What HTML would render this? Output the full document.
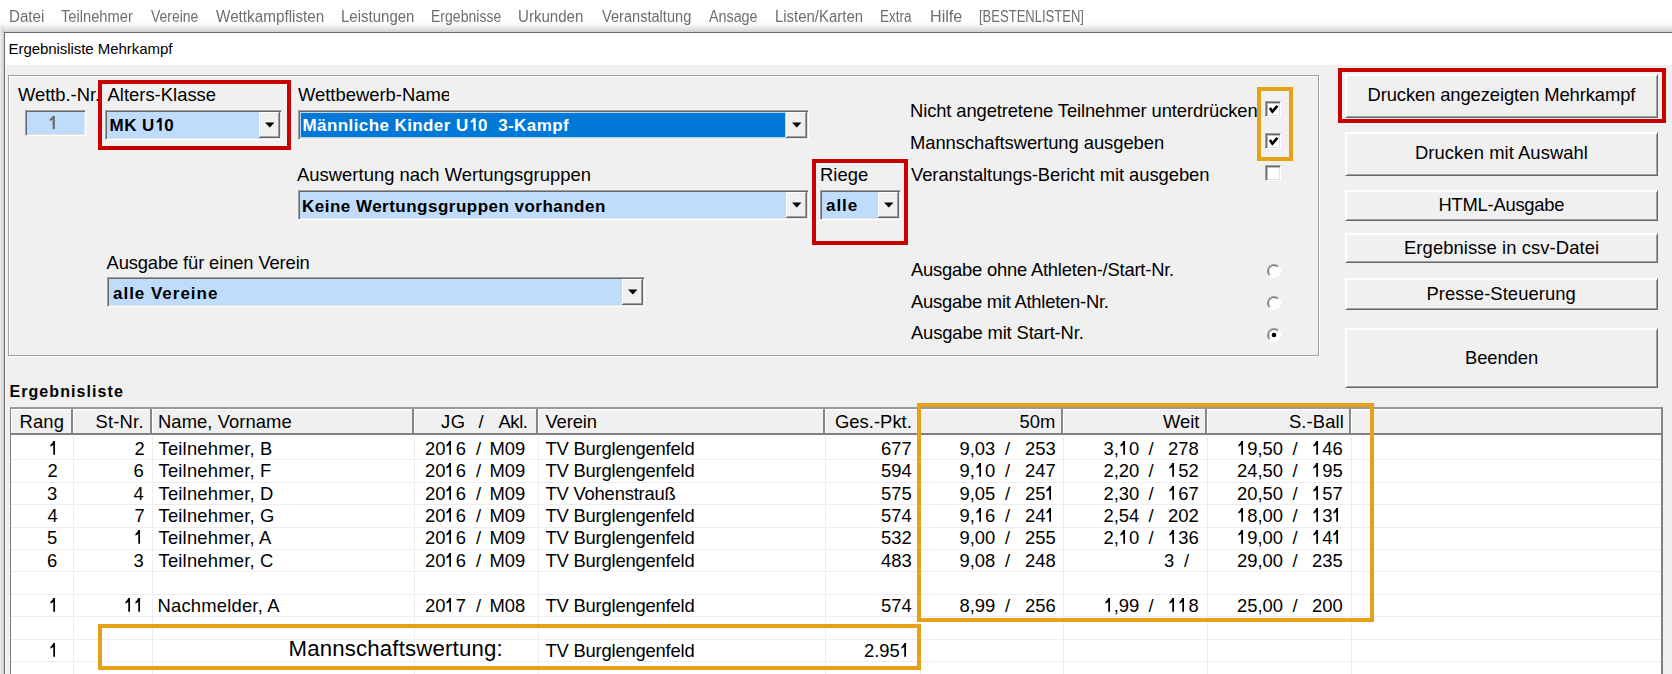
<!DOCTYPE html>
<html><head><meta charset="utf-8"><style>
html,body{margin:0;padding:0;}
body{width:1672px;height:674px;position:relative;overflow:hidden;background:#fff;font-family:"Liberation Sans", sans-serif;}
body>div,body>svg{position:absolute;}
</style></head><body>
<div style="left:0px;top:0px;width:1672px;height:674px;background:#fff;"></div>
<div style="left:0px;top:21px;width:1672px;height:11px;background:linear-gradient(#ffffff,#f7f7f7 35%,#e4e4e4 70%,#cfcfcf);"></div>
<div style="left:0px;top:24px;width:4px;height:650px;background:linear-gradient(90deg,#efefef,#cdcdcd);-webkit-mask-image:linear-gradient(transparent,#000 8px);mask-image:linear-gradient(transparent,#000 8px);"></div>
<div style="left:4px;top:32px;width:1668px;height:1px;background:#6a6a6a;"></div>
<div style="left:4px;top:32px;width:1px;height:642px;background:#6a6a6a;"></div>
<div style="left:5px;top:33px;width:1667px;height:32px;background:#fff;"></div>
<div style="left:5px;top:65px;width:1667px;height:609px;background:#f0f0f0;"></div>
<div style="left:5px;top:65px;width:1px;height:609px;background:#fcfcfc;"></div>
<div style="left:8.5px;top:41px;font-size:15px;line-height:15px;color:#000;white-space:pre;letter-spacing:-0.055px;">Ergebnisliste Mehrkampf</div>
<div style="left:8.5px;top:9px;font-size:16px;line-height:16px;color:#6e6e6e;white-space:pre;transform:scaleX(0.9457);transform-origin:0 0;">Datei</div>
<div style="left:61.0px;top:9px;font-size:16px;line-height:16px;color:#6e6e6e;white-space:pre;transform:scaleX(0.9179);transform-origin:0 0;">Teilnehmer</div>
<div style="left:150.5px;top:9px;font-size:16px;line-height:16px;color:#6e6e6e;white-space:pre;transform:scaleX(0.8722);transform-origin:0 0;">Vereine</div>
<div style="left:215.5px;top:9px;font-size:16px;line-height:16px;color:#6e6e6e;white-space:pre;transform:scaleX(0.954);transform-origin:0 0;">Wettkampflisten</div>
<div style="left:340.5px;top:9px;font-size:16px;line-height:16px;color:#6e6e6e;white-space:pre;transform:scaleX(0.9377);transform-origin:0 0;">Leistungen</div>
<div style="left:431.0px;top:9px;font-size:16px;line-height:16px;color:#6e6e6e;white-space:pre;transform:scaleX(0.8772);transform-origin:0 0;">Ergebnisse</div>
<div style="left:518.0px;top:9px;font-size:16px;line-height:16px;color:#6e6e6e;white-space:pre;transform:scaleX(0.9426);transform-origin:0 0;">Urkunden</div>
<div style="left:601.5px;top:9px;font-size:16px;line-height:16px;color:#6e6e6e;white-space:pre;transform:scaleX(0.9124);transform-origin:0 0;">Veranstaltung</div>
<div style="left:709.0px;top:9px;font-size:16px;line-height:16px;color:#6e6e6e;white-space:pre;transform:scaleX(0.8944);transform-origin:0 0;">Ansage</div>
<div style="left:774.5px;top:9px;font-size:16px;line-height:16px;color:#6e6e6e;white-space:pre;transform:scaleX(0.9333);transform-origin:0 0;">Listen/Karten</div>
<div style="left:880.0px;top:9px;font-size:16px;line-height:16px;color:#6e6e6e;white-space:pre;transform:scaleX(0.8405);transform-origin:0 0;">Extra</div>
<div style="left:930.0px;top:9px;font-size:16px;line-height:16px;color:#6e6e6e;white-space:pre;transform:scaleX(1.01);transform-origin:0 0;">Hilfe</div>
<div style="left:978.5px;top:9px;font-size:16px;line-height:16px;color:#6e6e6e;white-space:pre;transform:scaleX(0.8142);transform-origin:0 0;">[BESTENLISTEN]</div>
<div style="left:9px;top:76px;width:1311px;height:281px;border:1px solid #fff;box-sizing:border-box;"></div>
<div style="left:8px;top:75px;width:1311px;height:281px;border:1px solid #a0a0a0;box-sizing:border-box;"></div>
<div style="left:18.0px;top:86px;font-size:18.4px;line-height:18.4px;color:#000;white-space:pre;letter-spacing:-0.033px;">Wettb.-Nr.</div>
<div style="left:107.5px;top:86px;font-size:18.4px;line-height:18.4px;color:#000;white-space:pre;letter-spacing:0.017px;">Alters-Klasse</div>
<div style="left:298.0px;top:86px;font-size:18.4px;line-height:18.4px;color:#000;white-space:pre;width:150.5px;overflow:hidden;">Wettbewerb-Name</div>
<div style="left:297.0px;top:166px;font-size:18.4px;line-height:18.4px;color:#000;white-space:pre;letter-spacing:0.03px;">Auswertung nach Wertungsgruppen</div>
<div style="left:820.0px;top:166px;font-size:18.4px;line-height:18.4px;color:#000;white-space:pre;letter-spacing:0.075px;">Riege</div>
<div style="left:106.5px;top:254px;font-size:18.4px;line-height:18.4px;color:#000;white-space:pre;letter-spacing:-0.139px;">Ausgabe für einen Verein</div>
<div style="left:25px;top:110px;width:61px;height:26px;background:#bfdcfc;border-top:1px solid #a0a0a0;border-left:1px solid #a0a0a0;border-right:1px solid #fff;border-bottom:1px solid #fff;box-sizing:border-box;box-shadow:inset 1px 1px 0 #696969, inset -1px -1px 0 #e3e3e3;"></div>
<div style="left:48.0px;top:115px;font-size:17.5px;line-height:17.5px;color:#6d6d6d;white-space:pre;font-weight:bold;"><svg style="display:inline-block;width:0.556em;height:0.746em;vertical-align:0;position:static" viewBox="0 -30 556 746" preserveAspectRatio="none"><path d="M262 -30H392V716H262V190L100 255V145Q200 100 262 -30Z" fill="currentColor"/></svg></div>
<div style="left:105px;top:110px;width:177px;height:30px;background:#bfdcfc;border-top:1px solid #a0a0a0;border-left:1px solid #a0a0a0;border-right:1px solid #fff;border-bottom:1px solid #fff;box-sizing:border-box;box-shadow:inset 1px 1px 0 #696969, inset -1px -1px 0 #e3e3e3;"></div>
<div style="left:259px;top:112px;width:21px;height:26px;background:#f0f0f0;border-right:1px solid #696969;border-bottom:1px solid #696969;box-shadow:inset 1px 1px 0 #fff, inset -1px -1px 0 #a0a0a0;box-sizing:border-box;"></div>
<svg style="left:264.5px;top:122.0px;" width="10" height="6" viewBox="0 0 10 6"><path d="M0 0.5 H9.5 L4.75 5.5 Z" fill="#000"/></svg>
<div style="left:298px;top:110px;width:511px;height:30px;background:#bfdcfc;border-top:1px solid #a0a0a0;border-left:1px solid #a0a0a0;border-right:1px solid #fff;border-bottom:1px solid #fff;box-sizing:border-box;box-shadow:inset 1px 1px 0 #696969, inset -1px -1px 0 #e3e3e3;"></div>
<div style="left:786px;top:112px;width:21px;height:26px;background:#f0f0f0;border-right:1px solid #696969;border-bottom:1px solid #696969;box-shadow:inset 1px 1px 0 #fff, inset -1px -1px 0 #a0a0a0;box-sizing:border-box;"></div>
<svg style="left:791.5px;top:122.0px;" width="10" height="6" viewBox="0 0 10 6"><path d="M0 0.5 H9.5 L4.75 5.5 Z" fill="#000"/></svg>
<div style="left:300px;top:112px;width:486px;height:26px;background:#0078d7;border:1px solid #b8d8f8;box-sizing:border-box;"></div>
<div style="left:298px;top:190px;width:511px;height:30px;background:#bfdcfc;border-top:1px solid #a0a0a0;border-left:1px solid #a0a0a0;border-right:1px solid #fff;border-bottom:1px solid #fff;box-sizing:border-box;box-shadow:inset 1px 1px 0 #696969, inset -1px -1px 0 #e3e3e3;"></div>
<div style="left:786px;top:192px;width:21px;height:26px;background:#f0f0f0;border-right:1px solid #696969;border-bottom:1px solid #696969;box-shadow:inset 1px 1px 0 #fff, inset -1px -1px 0 #a0a0a0;box-sizing:border-box;"></div>
<svg style="left:791.5px;top:202.0px;" width="10" height="6" viewBox="0 0 10 6"><path d="M0 0.5 H9.5 L4.75 5.5 Z" fill="#000"/></svg>
<div style="left:820px;top:190px;width:81px;height:30px;background:#bfdcfc;border-top:1px solid #a0a0a0;border-left:1px solid #a0a0a0;border-right:1px solid #fff;border-bottom:1px solid #fff;box-sizing:border-box;box-shadow:inset 1px 1px 0 #696969, inset -1px -1px 0 #e3e3e3;"></div>
<div style="left:878px;top:192px;width:21px;height:26px;background:#f0f0f0;border-right:1px solid #696969;border-bottom:1px solid #696969;box-shadow:inset 1px 1px 0 #fff, inset -1px -1px 0 #a0a0a0;box-sizing:border-box;"></div>
<svg style="left:883.5px;top:202.0px;" width="10" height="6" viewBox="0 0 10 6"><path d="M0 0.5 H9.5 L4.75 5.5 Z" fill="#000"/></svg>
<div style="left:107px;top:277px;width:538px;height:30px;background:#bfdcfc;border-top:1px solid #a0a0a0;border-left:1px solid #a0a0a0;border-right:1px solid #fff;border-bottom:1px solid #fff;box-sizing:border-box;box-shadow:inset 1px 1px 0 #696969, inset -1px -1px 0 #e3e3e3;"></div>
<div style="left:622px;top:279px;width:21px;height:26px;background:#f0f0f0;border-right:1px solid #696969;border-bottom:1px solid #696969;box-shadow:inset 1px 1px 0 #fff, inset -1px -1px 0 #a0a0a0;box-sizing:border-box;"></div>
<svg style="left:627.5px;top:289.0px;" width="10" height="6" viewBox="0 0 10 6"><path d="M0 0.5 H9.5 L4.75 5.5 Z" fill="#000"/></svg>
<div style="left:109.5px;top:117px;font-size:17px;line-height:17px;color:#000;white-space:pre;font-weight:bold;letter-spacing:0.48px;">MK U<svg style="display:inline-block;width:0.556em;height:0.746em;vertical-align:0;position:static" viewBox="0 -30 556 746" preserveAspectRatio="none"><path d="M262 -30H392V716H262V190L100 255V145Q200 100 262 -30Z" fill="currentColor"/></svg>0</div>
<div style="left:302.5px;top:117px;font-size:17px;line-height:17px;color:#fff;white-space:pre;font-weight:bold;letter-spacing:0.411px;">Männliche Kinder U<svg style="display:inline-block;width:0.556em;height:0.746em;vertical-align:0;position:static" viewBox="0 -30 556 746" preserveAspectRatio="none"><path d="M262 -30H392V716H262V190L100 255V145Q200 100 262 -30Z" fill="currentColor"/></svg>0  3-Kampf</div>
<div style="left:302.0px;top:198px;font-size:17px;line-height:17px;color:#000;white-space:pre;font-weight:bold;letter-spacing:0.487px;">Keine Wertungsgruppen vorhanden</div>
<div style="left:826.0px;top:197px;font-size:17px;line-height:17px;color:#000;white-space:pre;font-weight:bold;letter-spacing:0.933px;">alle</div>
<div style="left:113.0px;top:285px;font-size:17px;line-height:17px;color:#000;white-space:pre;font-weight:bold;letter-spacing:0.982px;">alle Vereine</div>
<div style="left:910.0px;top:102px;font-size:18.4px;line-height:18.4px;color:#000;white-space:pre;letter-spacing:-0.118px;">Nicht angetretene Teilnehmer unterdrücken</div>
<div style="left:910.0px;top:134px;font-size:18.4px;line-height:18.4px;color:#000;white-space:pre;letter-spacing:-0.054px;">Mannschaftswertung ausgeben</div>
<div style="left:911.0px;top:166px;font-size:18.4px;line-height:18.4px;color:#000;white-space:pre;letter-spacing:-0.062px;">Veranstaltungs-Bericht mit ausgeben</div>
<div style="left:911.0px;top:261px;font-size:18.4px;line-height:18.4px;color:#000;white-space:pre;letter-spacing:-0.216px;">Ausgabe ohne Athleten-/Start-Nr.</div>
<div style="left:911.0px;top:293px;font-size:18.4px;line-height:18.4px;color:#000;white-space:pre;letter-spacing:-0.239px;">Ausgabe mit Athleten-Nr.</div>
<div style="left:911.0px;top:324px;font-size:18.4px;line-height:18.4px;color:#000;white-space:pre;letter-spacing:-0.15px;">Ausgabe mit Start-Nr.</div>
<div style="left:1265px;top:101px;width:16px;height:16px;background:#fff;border-top:1px solid #a0a0a0;border-left:1px solid #a0a0a0;border-right:1px solid #fff;border-bottom:1px solid #fff;box-shadow:inset 1px 1px 0 #696969, inset 2px 2px 0 #c0c0c0, inset -1px -1px 0 #e3e3e3;box-sizing:border-box;"></div>
<svg style="left:1265px;top:101px;" width="16" height="16" viewBox="0 0 16 16"><path d="M4.9 7 L7.4 10.6 L12.5 4.9" stroke="#000" stroke-width="2.8" fill="none" stroke-linejoin="miter" stroke-miterlimit="3"/></svg>
<div style="left:1265px;top:133px;width:16px;height:16px;background:#fff;border-top:1px solid #a0a0a0;border-left:1px solid #a0a0a0;border-right:1px solid #fff;border-bottom:1px solid #fff;box-shadow:inset 1px 1px 0 #696969, inset 2px 2px 0 #c0c0c0, inset -1px -1px 0 #e3e3e3;box-sizing:border-box;"></div>
<svg style="left:1265px;top:133px;" width="16" height="16" viewBox="0 0 16 16"><path d="M4.9 7 L7.4 10.6 L12.5 4.9" stroke="#000" stroke-width="2.8" fill="none" stroke-linejoin="miter" stroke-miterlimit="3"/></svg>
<div style="left:1265px;top:165px;width:16px;height:16px;background:#fff;border-top:1px solid #a0a0a0;border-left:1px solid #a0a0a0;border-right:1px solid #fff;border-bottom:1px solid #fff;box-shadow:inset 1px 1px 0 #696969, inset 2px 2px 0 #c0c0c0, inset -1px -1px 0 #e3e3e3;box-sizing:border-box;"></div>
<svg style="left:1266px;top:263px;" width="16" height="16" viewBox="0 0 16 16"><circle cx="8" cy="8" r="6.5" fill="#fff"/><path d="M12.6 3.4 A6.5 6.5 0 0 0 3.4 12.6" stroke="#a0a0a0" fill="none" stroke-width="1.2"/><path d="M11.9 4.1 A5.5 5.5 0 0 0 4.1 11.9" stroke="#696969" fill="none" stroke-width="1"/><path d="M3.4 12.6 A6.5 6.5 0 0 0 12.6 3.4" stroke="#ffffff" fill="none" stroke-width="1.2"/></svg>
<svg style="left:1266px;top:295px;" width="16" height="16" viewBox="0 0 16 16"><circle cx="8" cy="8" r="6.5" fill="#fff"/><path d="M12.6 3.4 A6.5 6.5 0 0 0 3.4 12.6" stroke="#a0a0a0" fill="none" stroke-width="1.2"/><path d="M11.9 4.1 A5.5 5.5 0 0 0 4.1 11.9" stroke="#696969" fill="none" stroke-width="1"/><path d="M3.4 12.6 A6.5 6.5 0 0 0 12.6 3.4" stroke="#ffffff" fill="none" stroke-width="1.2"/></svg>
<svg style="left:1266px;top:327px;" width="16" height="16" viewBox="0 0 16 16"><circle cx="8" cy="8" r="6.5" fill="#fff"/><path d="M12.6 3.4 A6.5 6.5 0 0 0 3.4 12.6" stroke="#a0a0a0" fill="none" stroke-width="1.2"/><path d="M11.9 4.1 A5.5 5.5 0 0 0 4.1 11.9" stroke="#696969" fill="none" stroke-width="1"/><path d="M3.4 12.6 A6.5 6.5 0 0 0 12.6 3.4" stroke="#ffffff" fill="none" stroke-width="1.2"/><circle cx="8" cy="8" r="2.3" fill="#000"/></svg>
<div style="left:1345px;top:74px;width:313px;height:44px;background:#f0f0f0;border-top:1px solid #fff;border-left:1px solid #fff;border-right:1px solid #696969;border-bottom:1px solid #696969;box-shadow:inset 1px 1px 0 #ffffff, inset -1px -1px 0 #a0a0a0;box-sizing:border-box;"></div>
<div style="left:1367.5px;top:86px;font-size:18.4px;line-height:18.4px;color:#000;white-space:pre;letter-spacing:-0.107px;">Drucken angezeigten Mehrkampf</div>
<div style="left:1345px;top:132px;width:313px;height:44px;background:#f0f0f0;border-top:1px solid #fff;border-left:1px solid #fff;border-right:1px solid #696969;border-bottom:1px solid #696969;box-shadow:inset 1px 1px 0 #ffffff, inset -1px -1px 0 #a0a0a0;box-sizing:border-box;"></div>
<div style="left:1415.0px;top:144px;font-size:18.4px;line-height:18.4px;color:#000;white-space:pre;letter-spacing:0.067px;">Drucken mit Auswahl</div>
<div style="left:1345px;top:190px;width:313px;height:31px;background:#f0f0f0;border-top:1px solid #fff;border-left:1px solid #fff;border-right:1px solid #696969;border-bottom:1px solid #696969;box-shadow:inset 1px 1px 0 #ffffff, inset -1px -1px 0 #a0a0a0;box-sizing:border-box;"></div>
<div style="left:1438.5px;top:196px;font-size:18.4px;line-height:18.4px;color:#000;white-space:pre;letter-spacing:-0.255px;">HTML-Ausgabe</div>
<div style="left:1345px;top:233px;width:313px;height:30px;background:#f0f0f0;border-top:1px solid #fff;border-left:1px solid #fff;border-right:1px solid #696969;border-bottom:1px solid #696969;box-shadow:inset 1px 1px 0 #ffffff, inset -1px -1px 0 #a0a0a0;box-sizing:border-box;"></div>
<div style="left:1404.0px;top:239px;font-size:18.4px;line-height:18.4px;color:#000;white-space:pre;letter-spacing:0.086px;">Ergebnisse in csv-Datei</div>
<div style="left:1345px;top:278px;width:313px;height:32px;background:#f0f0f0;border-top:1px solid #fff;border-left:1px solid #fff;border-right:1px solid #696969;border-bottom:1px solid #696969;box-shadow:inset 1px 1px 0 #ffffff, inset -1px -1px 0 #a0a0a0;box-sizing:border-box;"></div>
<div style="left:1426.5px;top:285px;font-size:18.4px;line-height:18.4px;color:#000;white-space:pre;letter-spacing:0.067px;">Presse-Steuerung</div>
<div style="left:1345px;top:328px;width:313px;height:60px;background:#f0f0f0;border-top:1px solid #fff;border-left:1px solid #fff;border-right:1px solid #696969;border-bottom:1px solid #696969;box-shadow:inset 1px 1px 0 #ffffff, inset -1px -1px 0 #a0a0a0;box-sizing:border-box;"></div>
<div style="left:1465.0px;top:349px;font-size:18.4px;line-height:18.4px;color:#000;white-space:pre;letter-spacing:-0.083px;">Beenden</div>
<div style="left:9.5px;top:384px;font-size:16px;line-height:16px;color:#000;white-space:pre;font-weight:bold;letter-spacing:1.067px;">Ergebnisliste</div>
<div style="left:10px;top:407px;width:1653px;height:267px;background:#fff;border-top:2px solid #9a9a9a;border-left:1px solid #808080;border-right:2px solid #808080;box-sizing:border-box;"></div>
<div style="left:11px;top:409px;width:62px;height:26px;background:#f0f0f0;border-right:2px solid #868686;border-bottom:2px solid #808080;box-shadow:inset 1px 1px 0 #fff;box-sizing:border-box;"></div>
<div style="left:73px;top:409px;width:79px;height:26px;background:#f0f0f0;border-right:2px solid #868686;border-bottom:2px solid #808080;box-shadow:inset 1px 1px 0 #fff;box-sizing:border-box;"></div>
<div style="left:152px;top:409px;width:262px;height:26px;background:#f0f0f0;border-right:2px solid #868686;border-bottom:2px solid #808080;box-shadow:inset 1px 1px 0 #fff;box-sizing:border-box;"></div>
<div style="left:414px;top:409px;width:124px;height:26px;background:#f0f0f0;border-right:2px solid #868686;border-bottom:2px solid #808080;box-shadow:inset 1px 1px 0 #fff;box-sizing:border-box;"></div>
<div style="left:538px;top:409px;width:287px;height:26px;background:#f0f0f0;border-right:2px solid #868686;border-bottom:2px solid #808080;box-shadow:inset 1px 1px 0 #fff;box-sizing:border-box;"></div>
<div style="left:825px;top:409px;width:94.5px;height:26px;background:#f0f0f0;border-right:2px solid #868686;border-bottom:2px solid #808080;box-shadow:inset 1px 1px 0 #fff;box-sizing:border-box;"></div>
<div style="left:919.5px;top:409px;width:143.5px;height:26px;background:#f0f0f0;border-right:2px solid #868686;border-bottom:2px solid #808080;box-shadow:inset 1px 1px 0 #fff;box-sizing:border-box;"></div>
<div style="left:1063px;top:409px;width:144px;height:26px;background:#f0f0f0;border-right:2px solid #868686;border-bottom:2px solid #808080;box-shadow:inset 1px 1px 0 #fff;box-sizing:border-box;"></div>
<div style="left:1207px;top:409px;width:144px;height:26px;background:#f0f0f0;border-right:2px solid #868686;border-bottom:2px solid #808080;box-shadow:inset 1px 1px 0 #fff;box-sizing:border-box;"></div>
<div style="left:1351px;top:409px;width:312px;height:26px;background:#f0f0f0;border-right:2px solid #868686;border-bottom:2px solid #808080;box-shadow:inset 1px 1px 0 #fff;box-sizing:border-box;"></div>
<div style="left:11px;top:459px;width:1650px;height:1px;background:#eeeeee;"></div>
<div style="left:11px;top:482px;width:1650px;height:1px;background:#eeeeee;"></div>
<div style="left:11px;top:504px;width:1650px;height:1px;background:#eeeeee;"></div>
<div style="left:11px;top:527px;width:1650px;height:1px;background:#eeeeee;"></div>
<div style="left:11px;top:549px;width:1650px;height:1px;background:#eeeeee;"></div>
<div style="left:11px;top:571px;width:1650px;height:1px;background:#eeeeee;"></div>
<div style="left:11px;top:594px;width:1650px;height:1px;background:#eeeeee;"></div>
<div style="left:11px;top:616px;width:1650px;height:1px;background:#eeeeee;"></div>
<div style="left:11px;top:639px;width:1650px;height:1px;background:#eeeeee;"></div>
<div style="left:11px;top:661px;width:1650px;height:1px;background:#eeeeee;"></div>
<div style="left:73px;top:435px;width:1px;height:239px;background:#eeeeee;"></div>
<div style="left:152px;top:435px;width:1px;height:239px;background:#eeeeee;"></div>
<div style="left:414px;top:435px;width:1px;height:239px;background:#eeeeee;"></div>
<div style="left:538px;top:435px;width:1px;height:239px;background:#eeeeee;"></div>
<div style="left:825px;top:435px;width:1px;height:239px;background:#eeeeee;"></div>
<div style="left:919.5px;top:435px;width:1px;height:239px;background:#eeeeee;"></div>
<div style="left:1063px;top:435px;width:1px;height:239px;background:#eeeeee;"></div>
<div style="left:1207px;top:435px;width:1px;height:239px;background:#eeeeee;"></div>
<div style="left:1351px;top:435px;width:1px;height:239px;background:#eeeeee;"></div>
<div style="left:19.5px;top:413px;font-size:18.4px;line-height:18.4px;color:#000;white-space:pre;letter-spacing:0.167px;">Rang</div>
<div style="left:95.5px;top:413px;font-size:18.4px;line-height:18.4px;color:#000;white-space:pre;letter-spacing:0.2px;">St-Nr.</div>
<div style="left:158.0px;top:413px;font-size:18.4px;line-height:18.4px;color:#000;white-space:pre;letter-spacing:0.067px;">Name, Vorname</div>
<div style="left:441.0px;top:413px;font-size:18.4px;line-height:18.4px;color:#000;white-space:pre;letter-spacing:0.6px;">JG</div>
<div style="left:478.5px;top:413px;font-size:18.4px;line-height:18.4px;color:#000;white-space:pre;">/</div>
<div style="left:498.5px;top:413px;font-size:18.4px;line-height:18.4px;color:#000;white-space:pre;letter-spacing:-0.4px;">Akl.</div>
<div style="left:545.5px;top:413px;font-size:18.4px;line-height:18.4px;color:#000;white-space:pre;letter-spacing:-0.14px;">Verein</div>
<div style="left:835.0px;top:413px;font-size:18.4px;line-height:18.4px;color:#000;white-space:pre;letter-spacing:0.025px;">Ges.-Pkt.</div>
<div style="left:1019.5px;top:413px;font-size:18.4px;line-height:18.4px;color:#000;white-space:pre;">50m</div>
<div style="left:1163.0px;top:413px;font-size:18.4px;line-height:18.4px;color:#000;white-space:pre;">Weit</div>
<div style="left:1289.0px;top:413px;font-size:18.4px;line-height:18.4px;color:#000;white-space:pre;letter-spacing:0.1px;">S.-Ball</div>
<div style="left:49.0px;top:440px;font-size:18.4px;line-height:18.4px;color:#000;white-space:pre;"><svg style="display:inline-block;width:0.556em;height:0.746em;vertical-align:0;position:static" viewBox="0 -30 556 746" preserveAspectRatio="none"><path d="M232 -30H328V716H232V190L78 285V182Q180 115 232 -30Z" fill="currentColor"/></svg></div>
<div style="left:134.5px;top:440px;font-size:18.4px;line-height:18.4px;color:#000;white-space:pre;">2</div>
<div style="left:158.5px;top:440px;font-size:18.4px;line-height:18.4px;color:#000;white-space:pre;letter-spacing:0.2px;">Teilnehmer, B</div>
<div style="left:425.0px;top:440px;font-size:18.4px;line-height:18.4px;color:#000;white-space:pre;">20<svg style="display:inline-block;width:0.556em;height:0.746em;vertical-align:0;position:static" viewBox="0 -30 556 746" preserveAspectRatio="none"><path d="M232 -30H328V716H232V190L78 285V182Q180 115 232 -30Z" fill="currentColor"/></svg>6</div>
<div style="left:476.0px;top:440px;font-size:18.4px;line-height:18.4px;color:#000;white-space:pre;">/</div>
<div style="left:489.5px;top:440px;font-size:18.4px;line-height:18.4px;color:#000;white-space:pre;">M09</div>
<div style="left:545.5px;top:440px;font-size:18.4px;line-height:18.4px;color:#000;white-space:pre;letter-spacing:-0.2px;">TV Burglengenfeld</div>
<div style="left:881.0px;top:440px;font-size:18.4px;line-height:18.4px;color:#000;white-space:pre;">677</div>
<div style="left:959.5px;top:440px;font-size:18.4px;line-height:18.4px;color:#000;white-space:pre;">9,03</div>
<div style="left:1005.0px;top:440px;font-size:18.4px;line-height:18.4px;color:#000;white-space:pre;">/</div>
<div style="left:1025.0px;top:440px;font-size:18.4px;line-height:18.4px;color:#000;white-space:pre;">253</div>
<div style="left:1103.5px;top:440px;font-size:18.4px;line-height:18.4px;color:#000;white-space:pre;">3,<svg style="display:inline-block;width:0.556em;height:0.746em;vertical-align:0;position:static" viewBox="0 -30 556 746" preserveAspectRatio="none"><path d="M232 -30H328V716H232V190L78 285V182Q180 115 232 -30Z" fill="currentColor"/></svg>0</div>
<div style="left:1148.5px;top:440px;font-size:18.4px;line-height:18.4px;color:#000;white-space:pre;">/</div>
<div style="left:1168.0px;top:440px;font-size:18.4px;line-height:18.4px;color:#000;white-space:pre;">278</div>
<div style="left:1237.0px;top:440px;font-size:18.4px;line-height:18.4px;color:#000;white-space:pre;"><svg style="display:inline-block;width:0.556em;height:0.746em;vertical-align:0;position:static" viewBox="0 -30 556 746" preserveAspectRatio="none"><path d="M232 -30H328V716H232V190L78 285V182Q180 115 232 -30Z" fill="currentColor"/></svg>9,50</div>
<div style="left:1292.5px;top:440px;font-size:18.4px;line-height:18.4px;color:#000;white-space:pre;">/</div>
<div style="left:1312.0px;top:440px;font-size:18.4px;line-height:18.4px;color:#000;white-space:pre;"><svg style="display:inline-block;width:0.556em;height:0.746em;vertical-align:0;position:static" viewBox="0 -30 556 746" preserveAspectRatio="none"><path d="M232 -30H328V716H232V190L78 285V182Q180 115 232 -30Z" fill="currentColor"/></svg>46</div>
<div style="left:47.5px;top:462px;font-size:18.4px;line-height:18.4px;color:#000;white-space:pre;">2</div>
<div style="left:133.5px;top:462px;font-size:18.4px;line-height:18.4px;color:#000;white-space:pre;">6</div>
<div style="left:158.5px;top:462px;font-size:18.4px;line-height:18.4px;color:#000;white-space:pre;letter-spacing:0.2px;">Teilnehmer, F</div>
<div style="left:425.0px;top:462px;font-size:18.4px;line-height:18.4px;color:#000;white-space:pre;">20<svg style="display:inline-block;width:0.556em;height:0.746em;vertical-align:0;position:static" viewBox="0 -30 556 746" preserveAspectRatio="none"><path d="M232 -30H328V716H232V190L78 285V182Q180 115 232 -30Z" fill="currentColor"/></svg>6</div>
<div style="left:476.0px;top:462px;font-size:18.4px;line-height:18.4px;color:#000;white-space:pre;">/</div>
<div style="left:489.5px;top:462px;font-size:18.4px;line-height:18.4px;color:#000;white-space:pre;">M09</div>
<div style="left:545.5px;top:462px;font-size:18.4px;line-height:18.4px;color:#000;white-space:pre;letter-spacing:-0.2px;">TV Burglengenfeld</div>
<div style="left:881.0px;top:462px;font-size:18.4px;line-height:18.4px;color:#000;white-space:pre;">594</div>
<div style="left:959.5px;top:462px;font-size:18.4px;line-height:18.4px;color:#000;white-space:pre;">9,<svg style="display:inline-block;width:0.556em;height:0.746em;vertical-align:0;position:static" viewBox="0 -30 556 746" preserveAspectRatio="none"><path d="M232 -30H328V716H232V190L78 285V182Q180 115 232 -30Z" fill="currentColor"/></svg>0</div>
<div style="left:1005.0px;top:462px;font-size:18.4px;line-height:18.4px;color:#000;white-space:pre;">/</div>
<div style="left:1025.0px;top:462px;font-size:18.4px;line-height:18.4px;color:#000;white-space:pre;">247</div>
<div style="left:1103.5px;top:462px;font-size:18.4px;line-height:18.4px;color:#000;white-space:pre;">2,20</div>
<div style="left:1148.5px;top:462px;font-size:18.4px;line-height:18.4px;color:#000;white-space:pre;">/</div>
<div style="left:1168.0px;top:462px;font-size:18.4px;line-height:18.4px;color:#000;white-space:pre;"><svg style="display:inline-block;width:0.556em;height:0.746em;vertical-align:0;position:static" viewBox="0 -30 556 746" preserveAspectRatio="none"><path d="M232 -30H328V716H232V190L78 285V182Q180 115 232 -30Z" fill="currentColor"/></svg>52</div>
<div style="left:1237.0px;top:462px;font-size:18.4px;line-height:18.4px;color:#000;white-space:pre;">24,50</div>
<div style="left:1292.5px;top:462px;font-size:18.4px;line-height:18.4px;color:#000;white-space:pre;">/</div>
<div style="left:1312.0px;top:462px;font-size:18.4px;line-height:18.4px;color:#000;white-space:pre;"><svg style="display:inline-block;width:0.556em;height:0.746em;vertical-align:0;position:static" viewBox="0 -30 556 746" preserveAspectRatio="none"><path d="M232 -30H328V716H232V190L78 285V182Q180 115 232 -30Z" fill="currentColor"/></svg>95</div>
<div style="left:47.0px;top:485px;font-size:18.4px;line-height:18.4px;color:#000;white-space:pre;">3</div>
<div style="left:133.5px;top:485px;font-size:18.4px;line-height:18.4px;color:#000;white-space:pre;">4</div>
<div style="left:158.5px;top:485px;font-size:18.4px;line-height:18.4px;color:#000;white-space:pre;letter-spacing:0.2px;">Teilnehmer, D</div>
<div style="left:425.0px;top:485px;font-size:18.4px;line-height:18.4px;color:#000;white-space:pre;">20<svg style="display:inline-block;width:0.556em;height:0.746em;vertical-align:0;position:static" viewBox="0 -30 556 746" preserveAspectRatio="none"><path d="M232 -30H328V716H232V190L78 285V182Q180 115 232 -30Z" fill="currentColor"/></svg>6</div>
<div style="left:476.0px;top:485px;font-size:18.4px;line-height:18.4px;color:#000;white-space:pre;">/</div>
<div style="left:489.5px;top:485px;font-size:18.4px;line-height:18.4px;color:#000;white-space:pre;">M09</div>
<div style="left:545.5px;top:485px;font-size:18.4px;line-height:18.4px;color:#000;white-space:pre;letter-spacing:-0.2px;">TV Vohenstrauß</div>
<div style="left:881.0px;top:485px;font-size:18.4px;line-height:18.4px;color:#000;white-space:pre;">575</div>
<div style="left:959.5px;top:485px;font-size:18.4px;line-height:18.4px;color:#000;white-space:pre;">9,05</div>
<div style="left:1005.0px;top:485px;font-size:18.4px;line-height:18.4px;color:#000;white-space:pre;">/</div>
<div style="left:1025.0px;top:485px;font-size:18.4px;line-height:18.4px;color:#000;white-space:pre;">25<svg style="display:inline-block;width:0.556em;height:0.746em;vertical-align:0;position:static" viewBox="0 -30 556 746" preserveAspectRatio="none"><path d="M232 -30H328V716H232V190L78 285V182Q180 115 232 -30Z" fill="currentColor"/></svg></div>
<div style="left:1103.5px;top:485px;font-size:18.4px;line-height:18.4px;color:#000;white-space:pre;">2,30</div>
<div style="left:1148.5px;top:485px;font-size:18.4px;line-height:18.4px;color:#000;white-space:pre;">/</div>
<div style="left:1168.0px;top:485px;font-size:18.4px;line-height:18.4px;color:#000;white-space:pre;"><svg style="display:inline-block;width:0.556em;height:0.746em;vertical-align:0;position:static" viewBox="0 -30 556 746" preserveAspectRatio="none"><path d="M232 -30H328V716H232V190L78 285V182Q180 115 232 -30Z" fill="currentColor"/></svg>67</div>
<div style="left:1237.0px;top:485px;font-size:18.4px;line-height:18.4px;color:#000;white-space:pre;">20,50</div>
<div style="left:1292.5px;top:485px;font-size:18.4px;line-height:18.4px;color:#000;white-space:pre;">/</div>
<div style="left:1312.0px;top:485px;font-size:18.4px;line-height:18.4px;color:#000;white-space:pre;"><svg style="display:inline-block;width:0.556em;height:0.746em;vertical-align:0;position:static" viewBox="0 -30 556 746" preserveAspectRatio="none"><path d="M232 -30H328V716H232V190L78 285V182Q180 115 232 -30Z" fill="currentColor"/></svg>57</div>
<div style="left:47.5px;top:507px;font-size:18.4px;line-height:18.4px;color:#000;white-space:pre;">4</div>
<div style="left:134.5px;top:507px;font-size:18.4px;line-height:18.4px;color:#000;white-space:pre;">7</div>
<div style="left:158.5px;top:507px;font-size:18.4px;line-height:18.4px;color:#000;white-space:pre;letter-spacing:0.2px;">Teilnehmer, G</div>
<div style="left:425.0px;top:507px;font-size:18.4px;line-height:18.4px;color:#000;white-space:pre;">20<svg style="display:inline-block;width:0.556em;height:0.746em;vertical-align:0;position:static" viewBox="0 -30 556 746" preserveAspectRatio="none"><path d="M232 -30H328V716H232V190L78 285V182Q180 115 232 -30Z" fill="currentColor"/></svg>6</div>
<div style="left:476.0px;top:507px;font-size:18.4px;line-height:18.4px;color:#000;white-space:pre;">/</div>
<div style="left:489.5px;top:507px;font-size:18.4px;line-height:18.4px;color:#000;white-space:pre;">M09</div>
<div style="left:545.5px;top:507px;font-size:18.4px;line-height:18.4px;color:#000;white-space:pre;letter-spacing:-0.2px;">TV Burglengenfeld</div>
<div style="left:881.0px;top:507px;font-size:18.4px;line-height:18.4px;color:#000;white-space:pre;">574</div>
<div style="left:959.5px;top:507px;font-size:18.4px;line-height:18.4px;color:#000;white-space:pre;">9,<svg style="display:inline-block;width:0.556em;height:0.746em;vertical-align:0;position:static" viewBox="0 -30 556 746" preserveAspectRatio="none"><path d="M232 -30H328V716H232V190L78 285V182Q180 115 232 -30Z" fill="currentColor"/></svg>6</div>
<div style="left:1005.0px;top:507px;font-size:18.4px;line-height:18.4px;color:#000;white-space:pre;">/</div>
<div style="left:1025.0px;top:507px;font-size:18.4px;line-height:18.4px;color:#000;white-space:pre;">24<svg style="display:inline-block;width:0.556em;height:0.746em;vertical-align:0;position:static" viewBox="0 -30 556 746" preserveAspectRatio="none"><path d="M232 -30H328V716H232V190L78 285V182Q180 115 232 -30Z" fill="currentColor"/></svg></div>
<div style="left:1103.5px;top:507px;font-size:18.4px;line-height:18.4px;color:#000;white-space:pre;">2,54</div>
<div style="left:1148.5px;top:507px;font-size:18.4px;line-height:18.4px;color:#000;white-space:pre;">/</div>
<div style="left:1168.0px;top:507px;font-size:18.4px;line-height:18.4px;color:#000;white-space:pre;">202</div>
<div style="left:1237.0px;top:507px;font-size:18.4px;line-height:18.4px;color:#000;white-space:pre;"><svg style="display:inline-block;width:0.556em;height:0.746em;vertical-align:0;position:static" viewBox="0 -30 556 746" preserveAspectRatio="none"><path d="M232 -30H328V716H232V190L78 285V182Q180 115 232 -30Z" fill="currentColor"/></svg>8,00</div>
<div style="left:1292.5px;top:507px;font-size:18.4px;line-height:18.4px;color:#000;white-space:pre;">/</div>
<div style="left:1312.0px;top:507px;font-size:18.4px;line-height:18.4px;color:#000;white-space:pre;"><svg style="display:inline-block;width:0.556em;height:0.746em;vertical-align:0;position:static" viewBox="0 -30 556 746" preserveAspectRatio="none"><path d="M232 -30H328V716H232V190L78 285V182Q180 115 232 -30Z" fill="currentColor"/></svg>3<svg style="display:inline-block;width:0.556em;height:0.746em;vertical-align:0;position:static" viewBox="0 -30 556 746" preserveAspectRatio="none"><path d="M232 -30H328V716H232V190L78 285V182Q180 115 232 -30Z" fill="currentColor"/></svg></div>
<div style="left:47.0px;top:529px;font-size:18.4px;line-height:18.4px;color:#000;white-space:pre;">5</div>
<div style="left:133.5px;top:529px;font-size:18.4px;line-height:18.4px;color:#000;white-space:pre;"><svg style="display:inline-block;width:0.556em;height:0.746em;vertical-align:0;position:static" viewBox="0 -30 556 746" preserveAspectRatio="none"><path d="M232 -30H328V716H232V190L78 285V182Q180 115 232 -30Z" fill="currentColor"/></svg></div>
<div style="left:158.5px;top:529px;font-size:18.4px;line-height:18.4px;color:#000;white-space:pre;letter-spacing:0.2px;">Teilnehmer, A</div>
<div style="left:425.0px;top:529px;font-size:18.4px;line-height:18.4px;color:#000;white-space:pre;">20<svg style="display:inline-block;width:0.556em;height:0.746em;vertical-align:0;position:static" viewBox="0 -30 556 746" preserveAspectRatio="none"><path d="M232 -30H328V716H232V190L78 285V182Q180 115 232 -30Z" fill="currentColor"/></svg>6</div>
<div style="left:476.0px;top:529px;font-size:18.4px;line-height:18.4px;color:#000;white-space:pre;">/</div>
<div style="left:489.5px;top:529px;font-size:18.4px;line-height:18.4px;color:#000;white-space:pre;">M09</div>
<div style="left:545.5px;top:529px;font-size:18.4px;line-height:18.4px;color:#000;white-space:pre;letter-spacing:-0.2px;">TV Burglengenfeld</div>
<div style="left:881.0px;top:529px;font-size:18.4px;line-height:18.4px;color:#000;white-space:pre;">532</div>
<div style="left:959.5px;top:529px;font-size:18.4px;line-height:18.4px;color:#000;white-space:pre;">9,00</div>
<div style="left:1005.0px;top:529px;font-size:18.4px;line-height:18.4px;color:#000;white-space:pre;">/</div>
<div style="left:1025.0px;top:529px;font-size:18.4px;line-height:18.4px;color:#000;white-space:pre;">255</div>
<div style="left:1103.5px;top:529px;font-size:18.4px;line-height:18.4px;color:#000;white-space:pre;">2,<svg style="display:inline-block;width:0.556em;height:0.746em;vertical-align:0;position:static" viewBox="0 -30 556 746" preserveAspectRatio="none"><path d="M232 -30H328V716H232V190L78 285V182Q180 115 232 -30Z" fill="currentColor"/></svg>0</div>
<div style="left:1148.5px;top:529px;font-size:18.4px;line-height:18.4px;color:#000;white-space:pre;">/</div>
<div style="left:1168.0px;top:529px;font-size:18.4px;line-height:18.4px;color:#000;white-space:pre;"><svg style="display:inline-block;width:0.556em;height:0.746em;vertical-align:0;position:static" viewBox="0 -30 556 746" preserveAspectRatio="none"><path d="M232 -30H328V716H232V190L78 285V182Q180 115 232 -30Z" fill="currentColor"/></svg>36</div>
<div style="left:1237.0px;top:529px;font-size:18.4px;line-height:18.4px;color:#000;white-space:pre;"><svg style="display:inline-block;width:0.556em;height:0.746em;vertical-align:0;position:static" viewBox="0 -30 556 746" preserveAspectRatio="none"><path d="M232 -30H328V716H232V190L78 285V182Q180 115 232 -30Z" fill="currentColor"/></svg>9,00</div>
<div style="left:1292.5px;top:529px;font-size:18.4px;line-height:18.4px;color:#000;white-space:pre;">/</div>
<div style="left:1312.0px;top:529px;font-size:18.4px;line-height:18.4px;color:#000;white-space:pre;"><svg style="display:inline-block;width:0.556em;height:0.746em;vertical-align:0;position:static" viewBox="0 -30 556 746" preserveAspectRatio="none"><path d="M232 -30H328V716H232V190L78 285V182Q180 115 232 -30Z" fill="currentColor"/></svg>4<svg style="display:inline-block;width:0.556em;height:0.746em;vertical-align:0;position:static" viewBox="0 -30 556 746" preserveAspectRatio="none"><path d="M232 -30H328V716H232V190L78 285V182Q180 115 232 -30Z" fill="currentColor"/></svg></div>
<div style="left:47.0px;top:552px;font-size:18.4px;line-height:18.4px;color:#000;white-space:pre;">6</div>
<div style="left:133.5px;top:552px;font-size:18.4px;line-height:18.4px;color:#000;white-space:pre;">3</div>
<div style="left:158.5px;top:552px;font-size:18.4px;line-height:18.4px;color:#000;white-space:pre;letter-spacing:0.2px;">Teilnehmer, C</div>
<div style="left:425.0px;top:552px;font-size:18.4px;line-height:18.4px;color:#000;white-space:pre;">20<svg style="display:inline-block;width:0.556em;height:0.746em;vertical-align:0;position:static" viewBox="0 -30 556 746" preserveAspectRatio="none"><path d="M232 -30H328V716H232V190L78 285V182Q180 115 232 -30Z" fill="currentColor"/></svg>6</div>
<div style="left:476.0px;top:552px;font-size:18.4px;line-height:18.4px;color:#000;white-space:pre;">/</div>
<div style="left:489.5px;top:552px;font-size:18.4px;line-height:18.4px;color:#000;white-space:pre;">M09</div>
<div style="left:545.5px;top:552px;font-size:18.4px;line-height:18.4px;color:#000;white-space:pre;letter-spacing:-0.2px;">TV Burglengenfeld</div>
<div style="left:881.0px;top:552px;font-size:18.4px;line-height:18.4px;color:#000;white-space:pre;">483</div>
<div style="left:959.5px;top:552px;font-size:18.4px;line-height:18.4px;color:#000;white-space:pre;">9,08</div>
<div style="left:1005.0px;top:552px;font-size:18.4px;line-height:18.4px;color:#000;white-space:pre;">/</div>
<div style="left:1025.0px;top:552px;font-size:18.4px;line-height:18.4px;color:#000;white-space:pre;">248</div>
<div style="left:1164.0px;top:552px;font-size:18.4px;line-height:18.4px;color:#000;white-space:pre;">3</div>
<div style="left:1184.0px;top:552px;font-size:18.4px;line-height:18.4px;color:#000;white-space:pre;">/</div>
<div style="left:1237.0px;top:552px;font-size:18.4px;line-height:18.4px;color:#000;white-space:pre;">29,00</div>
<div style="left:1292.5px;top:552px;font-size:18.4px;line-height:18.4px;color:#000;white-space:pre;">/</div>
<div style="left:1312.0px;top:552px;font-size:18.4px;line-height:18.4px;color:#000;white-space:pre;">235</div>
<div style="left:49.0px;top:597px;font-size:18.4px;line-height:18.4px;color:#000;white-space:pre;"><svg style="display:inline-block;width:0.556em;height:0.746em;vertical-align:0;position:static" viewBox="0 -30 556 746" preserveAspectRatio="none"><path d="M232 -30H328V716H232V190L78 285V182Q180 115 232 -30Z" fill="currentColor"/></svg></div>
<div style="left:123.5px;top:597px;font-size:18.4px;line-height:18.4px;color:#000;white-space:pre;"><svg style="display:inline-block;width:0.556em;height:0.746em;vertical-align:0;position:static" viewBox="0 -30 556 746" preserveAspectRatio="none"><path d="M232 -30H328V716H232V190L78 285V182Q180 115 232 -30Z" fill="currentColor"/></svg><svg style="display:inline-block;width:0.556em;height:0.746em;vertical-align:0;position:static" viewBox="0 -30 556 746" preserveAspectRatio="none"><path d="M232 -30H328V716H232V190L78 285V182Q180 115 232 -30Z" fill="currentColor"/></svg></div>
<div style="left:157.5px;top:597px;font-size:18.4px;line-height:18.4px;color:#000;white-space:pre;letter-spacing:0.2px;">Nachmelder, A</div>
<div style="left:425.0px;top:597px;font-size:18.4px;line-height:18.4px;color:#000;white-space:pre;">20<svg style="display:inline-block;width:0.556em;height:0.746em;vertical-align:0;position:static" viewBox="0 -30 556 746" preserveAspectRatio="none"><path d="M232 -30H328V716H232V190L78 285V182Q180 115 232 -30Z" fill="currentColor"/></svg>7</div>
<div style="left:476.0px;top:597px;font-size:18.4px;line-height:18.4px;color:#000;white-space:pre;">/</div>
<div style="left:489.5px;top:597px;font-size:18.4px;line-height:18.4px;color:#000;white-space:pre;">M08</div>
<div style="left:545.5px;top:597px;font-size:18.4px;line-height:18.4px;color:#000;white-space:pre;letter-spacing:-0.2px;">TV Burglengenfeld</div>
<div style="left:881.0px;top:597px;font-size:18.4px;line-height:18.4px;color:#000;white-space:pre;">574</div>
<div style="left:959.5px;top:597px;font-size:18.4px;line-height:18.4px;color:#000;white-space:pre;">8,99</div>
<div style="left:1005.0px;top:597px;font-size:18.4px;line-height:18.4px;color:#000;white-space:pre;">/</div>
<div style="left:1025.0px;top:597px;font-size:18.4px;line-height:18.4px;color:#000;white-space:pre;">256</div>
<div style="left:1103.5px;top:597px;font-size:18.4px;line-height:18.4px;color:#000;white-space:pre;"><svg style="display:inline-block;width:0.556em;height:0.746em;vertical-align:0;position:static" viewBox="0 -30 556 746" preserveAspectRatio="none"><path d="M232 -30H328V716H232V190L78 285V182Q180 115 232 -30Z" fill="currentColor"/></svg>,99</div>
<div style="left:1148.5px;top:597px;font-size:18.4px;line-height:18.4px;color:#000;white-space:pre;">/</div>
<div style="left:1168.0px;top:597px;font-size:18.4px;line-height:18.4px;color:#000;white-space:pre;"><svg style="display:inline-block;width:0.556em;height:0.746em;vertical-align:0;position:static" viewBox="0 -30 556 746" preserveAspectRatio="none"><path d="M232 -30H328V716H232V190L78 285V182Q180 115 232 -30Z" fill="currentColor"/></svg><svg style="display:inline-block;width:0.556em;height:0.746em;vertical-align:0;position:static" viewBox="0 -30 556 746" preserveAspectRatio="none"><path d="M232 -30H328V716H232V190L78 285V182Q180 115 232 -30Z" fill="currentColor"/></svg>8</div>
<div style="left:1237.0px;top:597px;font-size:18.4px;line-height:18.4px;color:#000;white-space:pre;">25,00</div>
<div style="left:1292.5px;top:597px;font-size:18.4px;line-height:18.4px;color:#000;white-space:pre;">/</div>
<div style="left:1312.0px;top:597px;font-size:18.4px;line-height:18.4px;color:#000;white-space:pre;">200</div>
<div style="left:49.0px;top:642px;font-size:18.4px;line-height:18.4px;color:#000;white-space:pre;"><svg style="display:inline-block;width:0.556em;height:0.746em;vertical-align:0;position:static" viewBox="0 -30 556 746" preserveAspectRatio="none"><path d="M232 -30H328V716H232V190L78 285V182Q180 115 232 -30Z" fill="currentColor"/></svg></div>
<div style="left:545.5px;top:642px;font-size:18.4px;line-height:18.4px;color:#000;white-space:pre;letter-spacing:-0.2px;">TV Burglengenfeld</div>
<div style="left:864.0px;top:642px;font-size:18.4px;line-height:18.4px;color:#000;white-space:pre;">2.95<svg style="display:inline-block;width:0.556em;height:0.746em;vertical-align:0;position:static" viewBox="0 -30 556 746" preserveAspectRatio="none"><path d="M232 -30H328V716H232V190L78 285V182Q180 115 232 -30Z" fill="currentColor"/></svg></div>
<div style="left:288.5px;top:638px;font-size:22.2px;line-height:22.2px;color:#000;white-space:pre;letter-spacing:0.178px;">Mannschaftswertung:</div>
<div style="left:98px;top:80px;width:193px;height:70px;border:4px solid #c80000;box-sizing:border-box;"></div>
<div style="left:812px;top:159px;width:96px;height:86px;border:4px solid #c80000;box-sizing:border-box;"></div>
<div style="left:1338px;top:68px;width:328px;height:55px;border:4px solid #c80000;box-sizing:border-box;"></div>
<div style="left:1257.2px;top:87px;width:35.799999999999955px;height:74px;border:4px solid #e6a117;box-sizing:border-box;"></div>
<div style="left:917px;top:403px;width:457px;height:219px;border:4px solid #e6a117;box-sizing:border-box;"></div>
<div style="left:98px;top:624px;width:823px;height:46px;border:4px solid #e6a117;box-sizing:border-box;"></div>
</body></html>
